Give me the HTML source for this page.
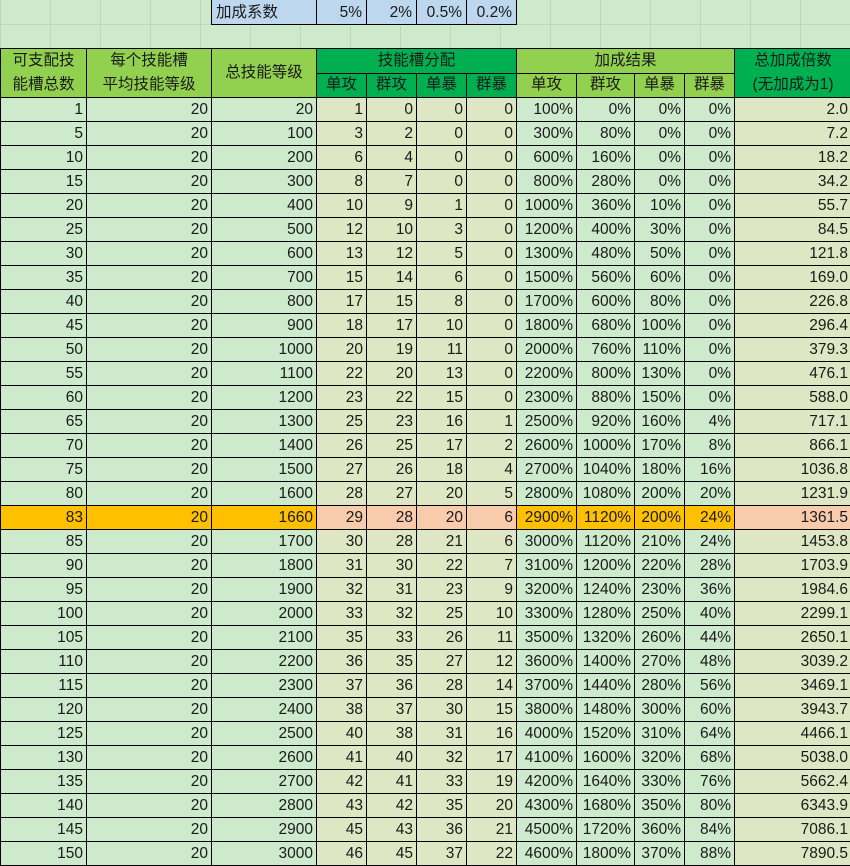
<!DOCTYPE html>
<html><head><meta charset="utf-8"><style>
body{margin:0;width:850px;height:865px;overflow:hidden;background:#cdeacd;font-family:"Liberation Sans","Noto Sans CJK SC",sans-serif;font-size:15.5px;color:#1a1a1a;position:relative}
.grid{position:absolute;left:0;top:0;width:850px;height:48px;background-image:linear-gradient(90deg,#b9d9ba 1px,transparent 1px),linear-gradient(0deg,transparent 23px,#b9d9ba 23px,#b9d9ba 24px,transparent 24px);background-size:50px 100%,100% 48px;}
.top{position:absolute;top:0;height:25px;border:1px solid #000;border-top:none;background:#bdd7ee;line-height:26px;box-sizing:border-box}
table{position:absolute;left:0;top:48px;border-collapse:collapse;table-layout:fixed;width:851px}
td{border:1px solid #000;padding:0 3px;text-align:right;height:24px;line-height:22px;white-space:nowrap;overflow:hidden;box-sizing:border-box}
.h td{text-align:center;height:24.5px}
.lg{background:#92d050}.dg{background:#00b050}
td.a{background:#cdeacd}td.y{background:#dfe6c3}
tr.hl td.a{background:#ffc000}tr.hl td.y{background:#f8cbad}
</style></head><body>
<div class="grid"></div>
<div class="top" style="left:211px;width:106px;padding-left:4px">加成系数</div>
<div class="top" style="left:316px;width:51px;text-align:right;padding-right:4px">5%</div>
<div class="top" style="left:366px;width:51px;text-align:right;padding-right:4px">2%</div>
<div class="top" style="left:416px;width:51px;text-align:right;padding-right:4px">0.5%</div>
<div class="top" style="left:466px;width:51px;text-align:right;padding-right:4px">0.2%</div>
<table>
<colgroup><col style="width:86px"><col style="width:125px"><col style="width:105px"><col style="width:50px"><col style="width:50px"><col style="width:50px"><col style="width:50px"><col style="width:60px"><col style="width:58px"><col style="width:50px"><col style="width:50px"><col style="width:117px"></colgroup>
<tr class="h"><td class="lg" rowspan="2" style="line-height:24px">可支配技<br>能槽总数</td><td class="lg" rowspan="2" style="line-height:24px">每个技能槽<br>平均技能等级</td><td class="lg" rowspan="2">总技能等级</td><td class="dg" colspan="4">技能槽分配</td><td class="lg" colspan="4">加成结果</td><td class="dg" rowspan="2" style="line-height:24px">总加成倍数<br>(无加成为1)</td></tr>
<tr class="h"><td class="dg">单攻</td><td class="dg">群攻</td><td class="dg">单暴</td><td class="dg">群暴</td><td class="lg">单攻</td><td class="lg">群攻</td><td class="lg">单暴</td><td class="lg">群暴</td></tr>
<tr><td class="a">1</td><td class="a">20</td><td class="a">20</td><td class="y">1</td><td class="y">0</td><td class="y">0</td><td class="y">0</td><td class="a">100%</td><td class="a">0%</td><td class="a">0%</td><td class="a">0%</td><td class="y">2.0</td></tr>
<tr><td class="a">5</td><td class="a">20</td><td class="a">100</td><td class="y">3</td><td class="y">2</td><td class="y">0</td><td class="y">0</td><td class="a">300%</td><td class="a">80%</td><td class="a">0%</td><td class="a">0%</td><td class="y">7.2</td></tr>
<tr><td class="a">10</td><td class="a">20</td><td class="a">200</td><td class="y">6</td><td class="y">4</td><td class="y">0</td><td class="y">0</td><td class="a">600%</td><td class="a">160%</td><td class="a">0%</td><td class="a">0%</td><td class="y">18.2</td></tr>
<tr><td class="a">15</td><td class="a">20</td><td class="a">300</td><td class="y">8</td><td class="y">7</td><td class="y">0</td><td class="y">0</td><td class="a">800%</td><td class="a">280%</td><td class="a">0%</td><td class="a">0%</td><td class="y">34.2</td></tr>
<tr><td class="a">20</td><td class="a">20</td><td class="a">400</td><td class="y">10</td><td class="y">9</td><td class="y">1</td><td class="y">0</td><td class="a">1000%</td><td class="a">360%</td><td class="a">10%</td><td class="a">0%</td><td class="y">55.7</td></tr>
<tr><td class="a">25</td><td class="a">20</td><td class="a">500</td><td class="y">12</td><td class="y">10</td><td class="y">3</td><td class="y">0</td><td class="a">1200%</td><td class="a">400%</td><td class="a">30%</td><td class="a">0%</td><td class="y">84.5</td></tr>
<tr><td class="a">30</td><td class="a">20</td><td class="a">600</td><td class="y">13</td><td class="y">12</td><td class="y">5</td><td class="y">0</td><td class="a">1300%</td><td class="a">480%</td><td class="a">50%</td><td class="a">0%</td><td class="y">121.8</td></tr>
<tr><td class="a">35</td><td class="a">20</td><td class="a">700</td><td class="y">15</td><td class="y">14</td><td class="y">6</td><td class="y">0</td><td class="a">1500%</td><td class="a">560%</td><td class="a">60%</td><td class="a">0%</td><td class="y">169.0</td></tr>
<tr><td class="a">40</td><td class="a">20</td><td class="a">800</td><td class="y">17</td><td class="y">15</td><td class="y">8</td><td class="y">0</td><td class="a">1700%</td><td class="a">600%</td><td class="a">80%</td><td class="a">0%</td><td class="y">226.8</td></tr>
<tr><td class="a">45</td><td class="a">20</td><td class="a">900</td><td class="y">18</td><td class="y">17</td><td class="y">10</td><td class="y">0</td><td class="a">1800%</td><td class="a">680%</td><td class="a">100%</td><td class="a">0%</td><td class="y">296.4</td></tr>
<tr><td class="a">50</td><td class="a">20</td><td class="a">1000</td><td class="y">20</td><td class="y">19</td><td class="y">11</td><td class="y">0</td><td class="a">2000%</td><td class="a">760%</td><td class="a">110%</td><td class="a">0%</td><td class="y">379.3</td></tr>
<tr><td class="a">55</td><td class="a">20</td><td class="a">1100</td><td class="y">22</td><td class="y">20</td><td class="y">13</td><td class="y">0</td><td class="a">2200%</td><td class="a">800%</td><td class="a">130%</td><td class="a">0%</td><td class="y">476.1</td></tr>
<tr><td class="a">60</td><td class="a">20</td><td class="a">1200</td><td class="y">23</td><td class="y">22</td><td class="y">15</td><td class="y">0</td><td class="a">2300%</td><td class="a">880%</td><td class="a">150%</td><td class="a">0%</td><td class="y">588.0</td></tr>
<tr><td class="a">65</td><td class="a">20</td><td class="a">1300</td><td class="y">25</td><td class="y">23</td><td class="y">16</td><td class="y">1</td><td class="a">2500%</td><td class="a">920%</td><td class="a">160%</td><td class="a">4%</td><td class="y">717.1</td></tr>
<tr><td class="a">70</td><td class="a">20</td><td class="a">1400</td><td class="y">26</td><td class="y">25</td><td class="y">17</td><td class="y">2</td><td class="a">2600%</td><td class="a">1000%</td><td class="a">170%</td><td class="a">8%</td><td class="y">866.1</td></tr>
<tr><td class="a">75</td><td class="a">20</td><td class="a">1500</td><td class="y">27</td><td class="y">26</td><td class="y">18</td><td class="y">4</td><td class="a">2700%</td><td class="a">1040%</td><td class="a">180%</td><td class="a">16%</td><td class="y">1036.8</td></tr>
<tr><td class="a">80</td><td class="a">20</td><td class="a">1600</td><td class="y">28</td><td class="y">27</td><td class="y">20</td><td class="y">5</td><td class="a">2800%</td><td class="a">1080%</td><td class="a">200%</td><td class="a">20%</td><td class="y">1231.9</td></tr>
<tr class="hl"><td class="a">83</td><td class="a">20</td><td class="a">1660</td><td class="y">29</td><td class="y">28</td><td class="y">20</td><td class="y">6</td><td class="a">2900%</td><td class="a">1120%</td><td class="a">200%</td><td class="a">24%</td><td class="y">1361.5</td></tr>
<tr><td class="a">85</td><td class="a">20</td><td class="a">1700</td><td class="y">30</td><td class="y">28</td><td class="y">21</td><td class="y">6</td><td class="a">3000%</td><td class="a">1120%</td><td class="a">210%</td><td class="a">24%</td><td class="y">1453.8</td></tr>
<tr><td class="a">90</td><td class="a">20</td><td class="a">1800</td><td class="y">31</td><td class="y">30</td><td class="y">22</td><td class="y">7</td><td class="a">3100%</td><td class="a">1200%</td><td class="a">220%</td><td class="a">28%</td><td class="y">1703.9</td></tr>
<tr><td class="a">95</td><td class="a">20</td><td class="a">1900</td><td class="y">32</td><td class="y">31</td><td class="y">23</td><td class="y">9</td><td class="a">3200%</td><td class="a">1240%</td><td class="a">230%</td><td class="a">36%</td><td class="y">1984.6</td></tr>
<tr><td class="a">100</td><td class="a">20</td><td class="a">2000</td><td class="y">33</td><td class="y">32</td><td class="y">25</td><td class="y">10</td><td class="a">3300%</td><td class="a">1280%</td><td class="a">250%</td><td class="a">40%</td><td class="y">2299.1</td></tr>
<tr><td class="a">105</td><td class="a">20</td><td class="a">2100</td><td class="y">35</td><td class="y">33</td><td class="y">26</td><td class="y">11</td><td class="a">3500%</td><td class="a">1320%</td><td class="a">260%</td><td class="a">44%</td><td class="y">2650.1</td></tr>
<tr><td class="a">110</td><td class="a">20</td><td class="a">2200</td><td class="y">36</td><td class="y">35</td><td class="y">27</td><td class="y">12</td><td class="a">3600%</td><td class="a">1400%</td><td class="a">270%</td><td class="a">48%</td><td class="y">3039.2</td></tr>
<tr><td class="a">115</td><td class="a">20</td><td class="a">2300</td><td class="y">37</td><td class="y">36</td><td class="y">28</td><td class="y">14</td><td class="a">3700%</td><td class="a">1440%</td><td class="a">280%</td><td class="a">56%</td><td class="y">3469.1</td></tr>
<tr><td class="a">120</td><td class="a">20</td><td class="a">2400</td><td class="y">38</td><td class="y">37</td><td class="y">30</td><td class="y">15</td><td class="a">3800%</td><td class="a">1480%</td><td class="a">300%</td><td class="a">60%</td><td class="y">3943.7</td></tr>
<tr><td class="a">125</td><td class="a">20</td><td class="a">2500</td><td class="y">40</td><td class="y">38</td><td class="y">31</td><td class="y">16</td><td class="a">4000%</td><td class="a">1520%</td><td class="a">310%</td><td class="a">64%</td><td class="y">4466.1</td></tr>
<tr><td class="a">130</td><td class="a">20</td><td class="a">2600</td><td class="y">41</td><td class="y">40</td><td class="y">32</td><td class="y">17</td><td class="a">4100%</td><td class="a">1600%</td><td class="a">320%</td><td class="a">68%</td><td class="y">5038.0</td></tr>
<tr><td class="a">135</td><td class="a">20</td><td class="a">2700</td><td class="y">42</td><td class="y">41</td><td class="y">33</td><td class="y">19</td><td class="a">4200%</td><td class="a">1640%</td><td class="a">330%</td><td class="a">76%</td><td class="y">5662.4</td></tr>
<tr><td class="a">140</td><td class="a">20</td><td class="a">2800</td><td class="y">43</td><td class="y">42</td><td class="y">35</td><td class="y">20</td><td class="a">4300%</td><td class="a">1680%</td><td class="a">350%</td><td class="a">80%</td><td class="y">6343.9</td></tr>
<tr><td class="a">145</td><td class="a">20</td><td class="a">2900</td><td class="y">45</td><td class="y">43</td><td class="y">36</td><td class="y">21</td><td class="a">4500%</td><td class="a">1720%</td><td class="a">360%</td><td class="a">84%</td><td class="y">7086.1</td></tr>
<tr><td class="a">150</td><td class="a">20</td><td class="a">3000</td><td class="y">46</td><td class="y">45</td><td class="y">37</td><td class="y">22</td><td class="a">4600%</td><td class="a">1800%</td><td class="a">370%</td><td class="a">88%</td><td class="y">7890.5</td></tr>
</table>
</body></html>
